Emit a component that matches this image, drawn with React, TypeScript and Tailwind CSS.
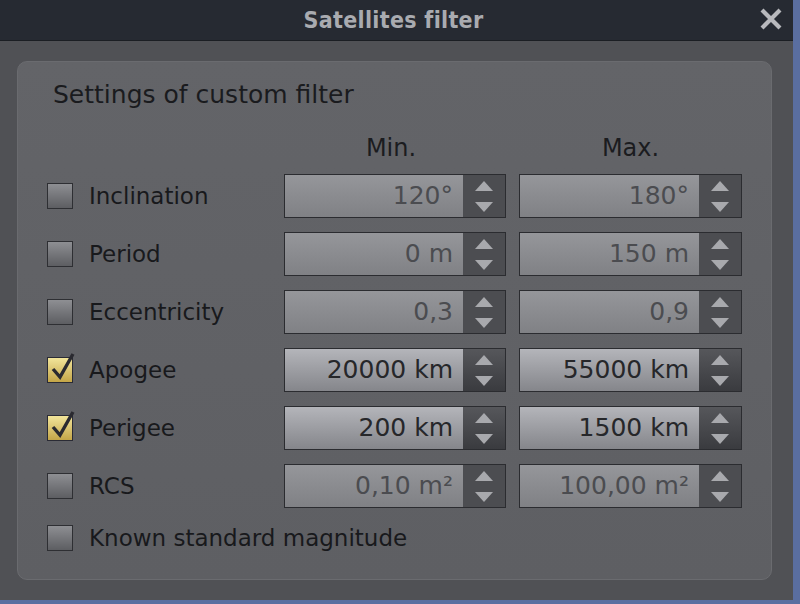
import React from "react";

type Row = { label: string; checked: boolean; min?: string; max?: string };

const rows: Row[] = [
  { label: "Inclination", checked: false, min: "120°", max: "180°" },
  { label: "Period", checked: false, min: "0 m", max: "150 m" },
  { label: "Eccentricity", checked: false, min: "0,3", max: "0,9" },
  { label: "Apogee", checked: true, min: "20000 km", max: "55000 km" },
  { label: "Perigee", checked: true, min: "200 km", max: "1500 km" },
  { label: "RCS", checked: false, min: "0,10 m²", max: "100,00 m²" },
];

function CheckBox({ checked }: { checked: boolean }) {
  return (
    <div className="relative w-[26px] h-[26px] shrink-0">
      {checked ? (
        <div className="w-[26px] h-[26px] border border-[#2a2b35] bg-gradient-to-b from-[#f2e59a] to-[#c4a647]" />
      ) : (
        <div className="w-[26px] h-[26px] border border-[#2e2f33] bg-gradient-to-b from-[#8e8f93] to-[#5d5e62]" />
      )}
      {checked && (
        <svg className="absolute left-[3px] top-[-7px]" width="30" height="32" viewBox="0 0 30 32">
          <path d="M3 19 L10 27 L23 4" fill="none" stroke="#2a2a30" strokeWidth="3.4" strokeLinejoin="miter" />
        </svg>
      )}
    </div>
  );
}

function Spin({ value, enabled }: { value: string; enabled: boolean }) {
  return (
    <div className="flex h-[44px] border border-[#2b2c30]">
      <div
        className={
          "flex-1 flex items-center justify-end pr-[10px] text-[25px] " +
          (enabled
            ? "bg-gradient-to-b from-[#b4b5ba] to-[#85868b] text-[#26272a]"
            : "bg-gradient-to-b from-[#95969a] to-[#808185] text-[#4b4c50]")
        }
      >
        {value}
      </div>
      <div
        className={
          "w-[42px] flex flex-col items-center justify-center gap-[11px] " +
          (enabled ? "bg-gradient-to-b from-[#56575b] to-[#3a3b3f]" : "bg-[#4c4d51]")
        }
      >
        <svg width="20" height="10" viewBox="0 0 20 10">
          <path d="M1 10 L10 0 L19 10 Z" fill="#a8a9ad" />
        </svg>
        <svg width="20" height="10" viewBox="0 0 20 10">
          <path d="M1 0 L19 0 L10 10 Z" fill="#a8a9ad" />
        </svg>
      </div>
    </div>
  );
}

export default function App() {
  return (
    <div
      className="w-[800px] h-[604px] bg-[#5a6ea0] overflow-hidden"
      style={{ fontFamily: '"DejaVu Sans", sans-serif' }}
    >
      <div className="w-[793px] h-[600px] flex flex-col bg-[#505155]">
        <div className="h-[41px] shrink-0 bg-[#262a32] border-b border-[#1b1e23] relative flex items-center justify-center">
          <span
            className="text-[23px] font-bold text-[#a9abb0] tracking-[0.3px] pr-[6px]"
            style={{ fontFamily: '"DejaVu Sans Condensed", "DejaVu Sans", sans-serif' }}
          >
            Satellites filter
          </span>
          <svg className="absolute left-[759px] top-[7px]" width="24" height="24" viewBox="0 0 24 24">
            <path d="M3 3 L21 21 M21 3 L3 21" stroke="#b8b9bd" strokeWidth="4.2" strokeLinecap="butt" />
          </svg>
        </div>
        <div className="flex-1 pt-[20px] pl-[17px] pr-[21px] pb-[20px]">
          <div className="h-full rounded-[10px] border border-[#6a6b6f] bg-gradient-to-b from-[#636468] to-[#5e5f63] pl-[29px] pt-[18px]">
            <div className="pl-[6px] h-[30px] leading-[30px] text-[25px] text-[#1a1b1e]">
              Settings of custom filter
            </div>
            <div className="mt-[23px] grid grid-cols-[224px_222px_223px] gap-x-[13px] h-[34px] text-[24px] text-[#1b1c1f] leading-[30px]">
              <div />
              <div className="text-center pr-[8px]">Min.</div>
              <div className="text-center">Max.</div>
            </div>
            {rows.map((r) => (
              <div key={r.label} className="grid grid-cols-[224px_222px_223px] gap-x-[13px] h-[58px] items-center">
                <div className="flex items-center gap-[16px]">
                  <CheckBox checked={r.checked} />
                  <span className="text-[23px] text-[#18191c]">{r.label}</span>
                </div>
                <Spin value={r.min!} enabled={r.checked} />
                <Spin value={r.max!} enabled={r.checked} />
              </div>
            ))}
            <div className="h-[46px] flex items-center gap-[16px]">
              <CheckBox checked={false} />
              <span className="text-[23px] text-[#18191c]">Known standard magnitude</span>
            </div>
          </div>
        </div>
      </div>
    </div>
  );
}
